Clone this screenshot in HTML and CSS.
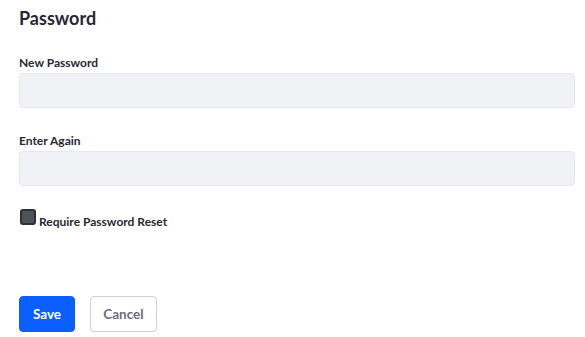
FILE: index.html
```html
<!DOCTYPE html>
<html>
<head>
<meta charset="utf-8">
<link rel="stylesheet" href="styles.css">
</head>
<body>
<div class="sheet">
  <h2 class="title">Password</h2>
  <div class="group">
    <label class="label">New Password</label>
    <div class="input"></div>
  </div>
  <div class="group">
    <label class="label">Enter Again</label>
    <div class="input"></div>
  </div>
  <div class="check-row">
    <span class="check"></span>
    <span class="check-label">Require Password Reset</span>
  </div>
  <div class="actions">
    <button class="btn btn-primary">Save</button>
    <button class="btn btn-secondary">Cancel</button>
  </div>
</div>
</body>
</html>
```
FILE: styles.css
```css
html, body {
  margin: 0;
  padding: 0;
  background: #fff;
}
body {
  font-family: Lato, "Noto Sans", sans-serif;
  color: #272833;
}
.sheet {
  padding: 6px 10px 0 19px;
}
.title {
  margin: 0 0 25px 0;
  font-size: 18px;
  line-height: 24px;
  font-weight: 700;
  color: #272833;
}
.group {
  margin-bottom: 25px;
}
.label {
  display: block;
  font-size: 12px;
  line-height: 16px;
  font-weight: 700;
  margin-bottom: 2px;
}
.input {
  height: 33px;
  background: #f1f2f5;
  border: 1px solid #e7e7ed;
  border-radius: 4px;
}
.check-row {
  display: flex;
  align-items: flex-end;
  margin-top: -2px;
}
.check {
  width: 12px;
  height: 12px;
  background: #50525a;
  border: 2px solid #2f3038;
  border-radius: 3px;
  margin: 0 3px 1px 1px;
}
.check-label {
  font-size: 12px;
  line-height: 14px;
  font-weight: 700;
  margin-bottom: -3px;
}
.actions {
  display: flex;
  gap: 15px;
  margin-top: 70px;
}
.btn {
  height: 36px;
  border-radius: 4px;
  font-family: Lato, "Noto Sans", sans-serif;
  font-size: 13.5px;
  font-weight: 700;
  padding: 0;
  cursor: pointer;
}
.btn-primary {
  width: 56px;
  background: #0b5fff;
  border: 1px solid #0b5fff;
  color: #fff;
}
.btn-secondary {
  width: 67px;
  background: #fff;
  border: 1px solid #cdced9;
  color: #6b6c7e;
}
```
